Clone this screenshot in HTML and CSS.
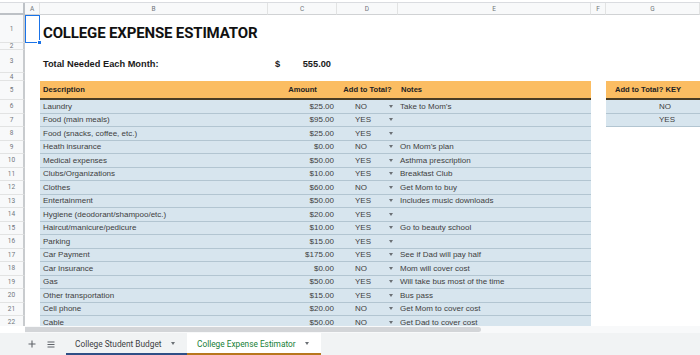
FILE: index.html
```html
<!DOCTYPE html>
<html>
<head>
<meta charset="utf-8">
<link rel="stylesheet" href="styles.css">
</head>
<body>
<div class="app">
  <div class="topstrip"></div>
  <div class="grid">
    <div class="corner"></div><div class="ch">A</div><div class="ch">B</div><div class="ch">C</div><div class="ch">D</div><div class="ch">E</div><div class="ch">F</div><div class="ch">G</div>

    <div class="rh">1</div><div class="sel"><span class="handle"></span></div><div class="title">COLLEGE EXPENSE ESTIMATOR</div><div></div><div></div><div></div><div></div><div></div>
    <div class="rh">2</div><div></div><div></div><div></div><div></div><div></div><div></div><div></div>
    <div class="rh">3</div><div></div><div class="total">Total Needed Each Month:</div><div class="sum"><span>$</span><span>555.00</span></div><div></div><div></div><div></div><div></div>
    <div class="rh">4</div><div></div><div></div><div></div><div></div><div></div><div></div><div></div>
    <div class="rh">5</div><div></div><div class="h">Description</div><div class="h ctr">Amount</div><div class="h ctr">Add to Total?</div><div class="h">Notes</div><div></div><div class="h ctr keyh">Add to Total? KEY</div>

    <div class="rh">6</div><div></div><div class="t">Laundry</div><div class="t amt">$25.00</div><div class="t yn">NO<i class="dd"></i></div><div class="t note">Take to Mom’s</div><div></div><div class="t key">NO</div>
    <div class="rh">7</div><div></div><div class="t">Food (main meals)</div><div class="t amt">$95.00</div><div class="t yn">YES<i class="dd"></i></div><div class="t note"></div><div></div><div class="t key">YES</div>
    <div class="rh">8</div><div></div><div class="t">Food (snacks, coffee, etc.)</div><div class="t amt">$25.00</div><div class="t yn">YES<i class="dd"></i></div><div class="t note"></div><div></div><div></div>
    <div class="rh">9</div><div></div><div class="t">Heath insurance</div><div class="t amt">$0.00</div><div class="t yn">NO<i class="dd"></i></div><div class="t note">On Mom’s plan</div><div></div><div></div>
    <div class="rh">10</div><div></div><div class="t">Medical expenses</div><div class="t amt">$50.00</div><div class="t yn">YES<i class="dd"></i></div><div class="t note">Asthma prescription</div><div></div><div></div>
    <div class="rh">11</div><div></div><div class="t">Clubs/Organizations</div><div class="t amt">$10.00</div><div class="t yn">YES<i class="dd"></i></div><div class="t note">Breakfast Club</div><div></div><div></div>
    <div class="rh">12</div><div></div><div class="t">Clothes</div><div class="t amt">$60.00</div><div class="t yn">NO<i class="dd"></i></div><div class="t note">Get Mom to buy</div><div></div><div></div>
    <div class="rh">13</div><div></div><div class="t">Entertainment</div><div class="t amt">$50.00</div><div class="t yn">YES<i class="dd"></i></div><div class="t note">Includes music downloads</div><div></div><div></div>
    <div class="rh">14</div><div></div><div class="t">Hygiene (deodorant/shampoo/etc.)</div><div class="t amt">$20.00</div><div class="t yn">YES<i class="dd"></i></div><div class="t note"></div><div></div><div></div>
    <div class="rh">15</div><div></div><div class="t">Haircut/manicure/pedicure</div><div class="t amt">$10.00</div><div class="t yn">YES<i class="dd"></i></div><div class="t note">Go to beauty school</div><div></div><div></div>
    <div class="rh">16</div><div></div><div class="t">Parking</div><div class="t amt">$15.00</div><div class="t yn">YES<i class="dd"></i></div><div class="t note"></div><div></div><div></div>
    <div class="rh">17</div><div></div><div class="t">Car Payment</div><div class="t amt">$175.00</div><div class="t yn">YES<i class="dd"></i></div><div class="t note">See if Dad will pay half</div><div></div><div></div>
    <div class="rh">18</div><div></div><div class="t">Car Insurance</div><div class="t amt">$0.00</div><div class="t yn">NO<i class="dd"></i></div><div class="t note">Mom will cover cost</div><div></div><div></div>
    <div class="rh">19</div><div></div><div class="t">Gas</div><div class="t amt">$50.00</div><div class="t yn">YES<i class="dd"></i></div><div class="t note">Will take bus most of the time</div><div></div><div></div>
    <div class="rh">20</div><div></div><div class="t">Other transportation</div><div class="t amt">$15.00</div><div class="t yn">YES<i class="dd"></i></div><div class="t note">Bus pass</div><div></div><div></div>
    <div class="rh">21</div><div></div><div class="t">Cell phone</div><div class="t amt">$20.00</div><div class="t yn">NO<i class="dd"></i></div><div class="t note">Get Mom to cover cost</div><div></div><div></div>
    <div class="rh">22</div><div></div><div class="t">Cable</div><div class="t amt">$50.00</div><div class="t yn">NO<i class="dd"></i></div><div class="t note">Get Dad to cover cost</div><div></div><div></div>
  </div>
  <div class="hscroll"><div class="hs-left"></div><div class="thumb"></div><div class="track"></div></div>
  <div class="tabbar">
    <div class="tb-btn">
      <svg width="8" height="8" viewBox="0 0 8 8"><path d="M4 0.5V7.5M0.5 4H7.5" stroke="#5f6368" stroke-width="1.1" fill="none"/></svg>
    </div>
    <div class="tb-btn">
      <svg width="8" height="7" viewBox="0 0 8 7"><path d="M0.5 1H7.5M0.5 3.5H7.5M0.5 6H7.5" stroke="#5f6368" stroke-width="1.1" fill="none"/></svg>
    </div>
    <div class="tab tab1">College Student Budget<i class="tdd"></i></div>
    <div class="tab tab2">College Expense Estimator<i class="tdd"></i></div>
  </div>
</div>
</body>
</html>
```
FILE: styles.css
```css
* { box-sizing: border-box; margin: 0; padding: 0; }
html, body { width: 700px; height: 355px; overflow: hidden; background: #fff; }
body { font-family: "Liberation Sans", Arial, sans-serif; color: #333; }

.app { display: flex; flex-direction: column; height: 355px; }
.topstrip { height: 3px; flex: none; background: #fff; border-bottom: 1px solid #dadce0; }

.grid {
  flex: none;
  height: 323px;
  overflow: hidden;
  display: grid;
  grid-template-columns: 25px 15px 228px 69px 61px 193px 15px 94px;
  grid-template-rows: 12px 28px 7px 23px 8px 19px repeat(17, 13.5px);
}
.grid > div { display: flex; align-items: center; white-space: nowrap; overflow: hidden; min-width: 0; }

.corner { background: #f8f9fa; border-right: 2px solid #bdc1c6; border-bottom: 2px solid #bdc1c6; }
.ch {
  justify-content: center;
  background: #f8f9fa;
  border-right: 1px solid #e2e3e3;
  border-bottom: 1px solid #d0d2d4;
  font: 6.5px "Roboto", sans-serif;
  color: #70757a;
}
.rh {
  justify-content: center;
  background: #f8f9fa;
  border-right: 2px solid #c8cbce;
  border-bottom: 1px solid #e2e3e3;
  font: 6.5px "Roboto", sans-serif;
  color: #70757a;
}

.grid > .sel { position: relative; overflow: visible; border: 1px solid #1a73e8; }
.handle {
  position: absolute; right: -3px; bottom: -3px;
  width: 5px; height: 5px; background: #1a73e8; border: 1px solid #fff;
}

.title {
  align-items: flex-end !important;
  padding: 0 0 2px 3px;
  font: bold 15px/15px "Roboto", sans-serif;
  letter-spacing: -0.15px;
  color: #111;
  overflow: visible !important;
}
.total {
  align-items: flex-end !important;
  padding: 0 0 4px 3px;
  font: bold 9.25px/10px "Liberation Sans", sans-serif;
  color: #1a1a1a;
}
.sum {
  justify-content: space-between;
  align-items: flex-end !important;
  padding: 0 6px 4px 7px;
  font: bold 9.25px/10px "Liberation Sans", sans-serif;
  color: #1a1a1a;
}

.h {
  background: #fbbd62;
  border-bottom: 2px solid #4a3c24;
  font: bold 7.6px "Liberation Sans", sans-serif;
  color: #222;
  padding-left: 3px;
}
.h.ctr { justify-content: center; padding-left: 0; }
.h.keyh { padding-right: 10px; }

.t {
  background: #d7e5ee;
  border-bottom: 1px solid #b2c5d1;
  font: 8px "Liberation Sans", sans-serif;
  color: #404040;
  padding-left: 3px;
}
.t.amt { justify-content: flex-end; padding: 0 3px 0 0; }
.t.yn { padding-left: 18px; }
.t.note { padding-left: 2px; }
.t.key { padding-left: 53px; }
.dd {
  margin-left: auto; margin-right: 5px;
  width: 0; height: 0;
  border-left: 2.5px solid transparent;
  border-right: 2.5px solid transparent;
  border-top: 3px solid #6b7075;
}

.hscroll { flex: none; height: 7px; display: flex; background: #f8f9fa; }
.hs-left { width: 25px; background: #fff; }
.thumb { width: 456px; margin: 1px 0; background: #d3d5d8; border-radius: 0 3px 3px 0; }
.track { flex: 1; }

.tabbar {
  flex: 1;
  display: flex;
  align-items: stretch;
  background: #f1f3f4;
  font: 8.3px "Roboto", sans-serif;
}
.tb-btn { width: 19px; display: flex; align-items: center; justify-content: center; }
.tb-btn:first-child { margin-left: 22px; }
.tb-btn:nth-child(2) { margin-right: 6px; }
.tab {
  display: flex; align-items: center;
  color: #3c4043;
  border-bottom: 2px solid transparent;
  padding-top: 1px;
}
.tab1 { width: 121px; padding-left: 9px; border-bottom-color: #2f4f86; }
.tab2 { width: 134px; padding-left: 10px; background: #fff; color: #188038; border-bottom-color: #b8771d; }
.tdd {
  margin-left: 9px;
  width: 0; height: 0;
  border-left: 2.5px solid transparent;
  border-right: 2.5px solid transparent;
  border-top: 3px solid #6b7075;
}
```
